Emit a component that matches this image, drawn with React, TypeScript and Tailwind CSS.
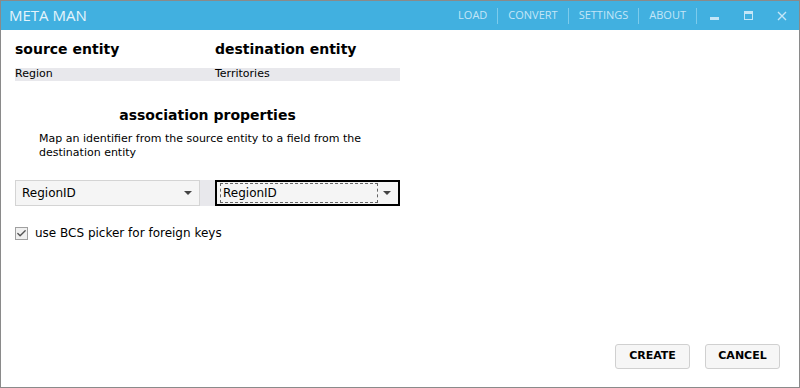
import { Check } from 'lucide-react';

const nav = ['LOAD', 'CONVERT', 'SETTINGS', 'ABOUT'];

function Select({ value, focused }: { value: string; focused?: boolean }) {
  return (
    <div
      className={`flex h-[26px] w-[185px] items-center justify-between bg-[#f5f5f5] pl-[3px] pr-[7px] ${
        focused ? 'border-2 border-black' : 'border border-[#d4d4d4]'
      }`}
    >
      <span
        className={`flex h-[20px] items-center px-[2px] text-[12px] text-black ${
          focused ? 'w-[158px] border border-dashed border-[#666]' : 'pl-[3px]'
        }`}
      >
        {value}
      </span>
      <span className="h-0 w-0 border-x-[4px] border-t-[4px] border-x-transparent border-t-[#444]" />
    </div>
  );
}

export default function App() {
  return (
    <div className="flex h-[388px] w-[800px] flex-col border border-t-0 border-[#8a8a8a] bg-white font-['DejaVu_Sans',sans-serif]">
      {/* Title bar */}
      <div className="flex h-[30px] items-center border-t border-[#8a8a8a] bg-[#41b0e0] pl-[8px]">
        <span className="font-['Open_Sans',sans-serif] text-[15px] text-[#e6f4fb]">META MAN</span>
        <div className="ml-auto flex items-center font-['Open_Sans',sans-serif] text-[11px] text-[#c4e6f7]">
          {nav.map((n) => (
            <div key={n} className="flex items-center">
              <span className="px-[10px]">{n}</span>
              <span className="h-[16px] w-px bg-[#7ccbec]" />
            </div>
          ))}
          <div className="flex h-[29px] w-[34px] items-center justify-center">
            <span className="mt-[6px] h-[3px] w-[9px] bg-[#c4e6f7]" />
          </div>
          <div className="flex h-[29px] w-[34px] items-center justify-center">
            <span className="h-[9px] w-[9px] border border-t-[3px] border-[#c4e6f7]" />
          </div>
          <div className="flex h-[29px] w-[34px] items-center justify-center">
            <svg width="10" height="10" viewBox="0 0 10 10" stroke="#c4e6f7" strokeWidth="1.4">
              <path d="M1 1L9 9M9 1L1 9" />
            </svg>
          </div>
        </div>
      </div>

      {/* Body */}
      <div className="flex flex-1 flex-col px-[14px]">
        <div className="w-[385px]">
          <div className="mt-[9px] flex text-[14px] font-bold leading-[20px] text-black">
            <span className="w-[200px]">source entity</span>
            <span>destination entity</span>
          </div>
          <div className="mt-[9px] flex h-[13px] items-center bg-[#e8e8ec] text-[11px] text-black">
            <span className="w-[200px]">Region</span>
            <span>Territories</span>
          </div>

          <div className="mt-[24px] text-center text-[14px] font-bold leading-[20px] text-black">
            association properties
          </div>
          <p className="mt-[7px] pl-[24px] pr-[20px] text-[11px] leading-[14px] text-black">
            Map an identifier from the source entity to a field from the destination entity
          </p>

          <div className="mt-[20px] flex bg-[#e8e8ec]">
            <Select value="RegionID" />
            <span className="w-[15px]" />
            <Select value="RegionID" focused />
          </div>
        </div>

        <label className="mt-[18px] flex items-center gap-[7px] text-[12px] text-black">
          <span className="flex h-[13px] w-[13px] items-center justify-center border border-[#a0a0a0] bg-[#f0f0f0]">
            <Check size={11} strokeWidth={3} className="text-[#555]" />
          </span>
          use BCS picker for foreign keys
        </label>

        <div className="mt-auto mb-[18px] flex justify-end gap-[15px] pr-[5px]">
          <button className="h-[25px] w-[75px] rounded-[3px] border border-[#d0d0d0] bg-[#f6f6f6] text-[11px] font-bold text-black">
            CREATE
          </button>
          <button className="h-[25px] w-[75px] rounded-[3px] border border-[#d0d0d0] bg-[#f6f6f6] text-[11px] font-bold text-black">
            CANCEL
          </button>
        </div>
      </div>
    </div>
  );
}
